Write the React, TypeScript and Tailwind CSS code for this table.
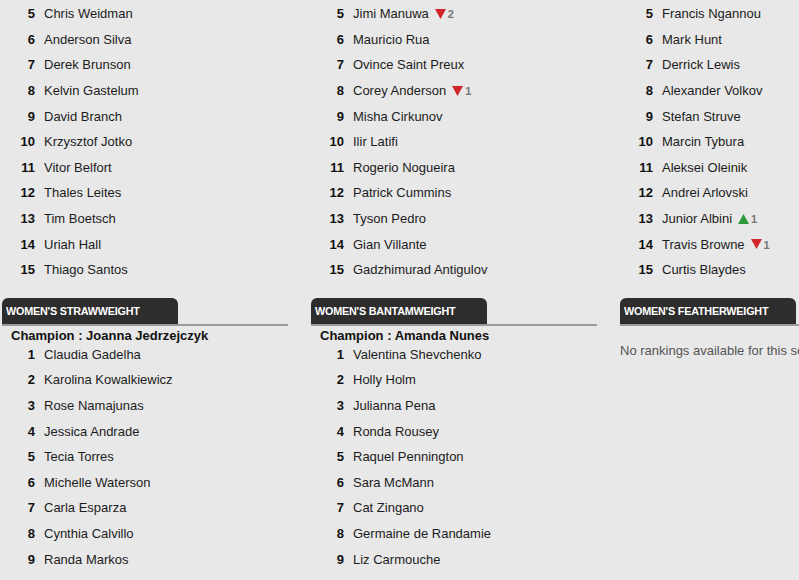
import React from 'react'

type Move = {dir: 'up' | 'down'; n: number}
type Fighter = {rank: number; name: string; move?: Move}

const top: Fighter[][] = [
  [
    {rank: 5, name: 'Chris Weidman'},
    {rank: 6, name: 'Anderson Silva'},
    {rank: 7, name: 'Derek Brunson'},
    {rank: 8, name: 'Kelvin Gastelum'},
    {rank: 9, name: 'David Branch'},
    {rank: 10, name: 'Krzysztof Jotko'},
    {rank: 11, name: 'Vitor Belfort'},
    {rank: 12, name: 'Thales Leites'},
    {rank: 13, name: 'Tim Boetsch'},
    {rank: 14, name: 'Uriah Hall'},
    {rank: 15, name: 'Thiago Santos'},
  ],
  [
    {rank: 5, name: 'Jimi Manuwa', move: {dir: 'down', n: 2}},
    {rank: 6, name: 'Mauricio Rua'},
    {rank: 7, name: 'Ovince Saint Preux'},
    {rank: 8, name: 'Corey Anderson', move: {dir: 'down', n: 1}},
    {rank: 9, name: 'Misha Cirkunov'},
    {rank: 10, name: 'Ilir Latifi'},
    {rank: 11, name: 'Rogerio Nogueira'},
    {rank: 12, name: 'Patrick Cummins'},
    {rank: 13, name: 'Tyson Pedro'},
    {rank: 14, name: 'Gian Villante'},
    {rank: 15, name: 'Gadzhimurad Antigulov'},
  ],
  [
    {rank: 5, name: 'Francis Ngannou'},
    {rank: 6, name: 'Mark Hunt'},
    {rank: 7, name: 'Derrick Lewis'},
    {rank: 8, name: 'Alexander Volkov'},
    {rank: 9, name: 'Stefan Struve'},
    {rank: 10, name: 'Marcin Tybura'},
    {rank: 11, name: 'Aleksei Oleinik'},
    {rank: 12, name: 'Andrei Arlovski'},
    {rank: 13, name: 'Junior Albini', move: {dir: 'up', n: 1}},
    {rank: 14, name: 'Travis Browne', move: {dir: 'down', n: 1}},
    {rank: 15, name: 'Curtis Blaydes'},
  ],
]

const divisions: {title: string; champion?: string; list: string[]}[] = [
  {
    title: "WOMEN'S STRAWWEIGHT",
    champion: 'Joanna Jedrzejczyk',
    list: [
      'Claudia Gadelha',
      'Karolina Kowalkiewicz',
      'Rose Namajunas',
      'Jessica Andrade',
      'Tecia Torres',
      'Michelle Waterson',
      'Carla Esparza',
      'Cynthia Calvillo',
      'Randa Markos',
    ],
  },
  {
    title: "WOMEN'S BANTAMWEIGHT",
    champion: 'Amanda Nunes',
    list: [
      'Valentina Shevchenko',
      'Holly Holm',
      'Julianna Pena',
      'Ronda Rousey',
      'Raquel Pennington',
      'Sara McMann',
      'Cat Zingano',
      'Germaine de Randamie',
      'Liz Carmouche',
    ],
  },
  {title: "WOMEN'S FEATHERWEIGHT", list: []},
]

function Arrow({move}: {move: Move}) {
  return (
    <span className="ml-[6px] flex items-center">
      <svg width="11" height="10" viewBox="0 0 11 10">
        {move.dir === 'down' ? (
          <polygon points="0,0 11,0 5.5,10" fill="#d0262b" />
        ) : (
          <polygon points="0,10 11,10 5.5,0" fill="#2e9a3a" />
        )}
      </svg>
      <span className="ml-[2px] mt-[2px] text-[11px] font-bold text-[#777]">{move.n}</span>
    </span>
  )
}

function Row({f}: {f: Fighter}) {
  return (
    <div className="flex h-[25.6px] items-center">
      <span className="w-[33px] text-right font-bold text-[#111]">{f.rank}</span>
      <span className="ml-[9px] text-[#1c1c1c]">{f.name}</span>
      {f.move && <Arrow move={f.move} />}
    </div>
  )
}

export default function App() {
  return (
    <div
      className="h-[580px] w-[799px] overflow-hidden bg-[#e8e8e8] pt-[1px] text-[13px] leading-none"
      style={{fontFamily: '"Liberation Sans", Arial, sans-serif'}}
    >
      <div className="flex pl-[2px]">
        {top.map((col, i) => (
          <div key={i} className="w-[309px] shrink-0">
            {col.map((f) => (
              <Row key={f.rank} f={f} />
            ))}
            <div className="mt-[15px]">
              <div className="w-[286px] border-b-2 border-[#9a9a9a]">
                <div className="flex h-[26px] w-[176px] items-center rounded-t-[6px] bg-[#2d2d2d] pl-[4px] pt-[1px] text-[10.8px] font-bold tracking-[-0.2px] text-white">
                  {divisions[i].title}
                </div>
              </div>
              {divisions[i].champion ? (
                <>
                  <div className="mt-[4px] flex h-[12px] items-center whitespace-nowrap pl-[9px] font-bold text-[#111]">
                    Champion : {divisions[i].champion}
                  </div>
                  {divisions[i].list.map((name, j) => (
                    <Row key={name} f={{rank: j + 1, name}} />
                  ))}
                </>
              ) : (
                <div className="mt-[18px] whitespace-nowrap text-[#555]">
                  No rankings available for this section
                </div>
              )}
            </div>
          </div>
        ))}
      </div>
    </div>
  )
}
